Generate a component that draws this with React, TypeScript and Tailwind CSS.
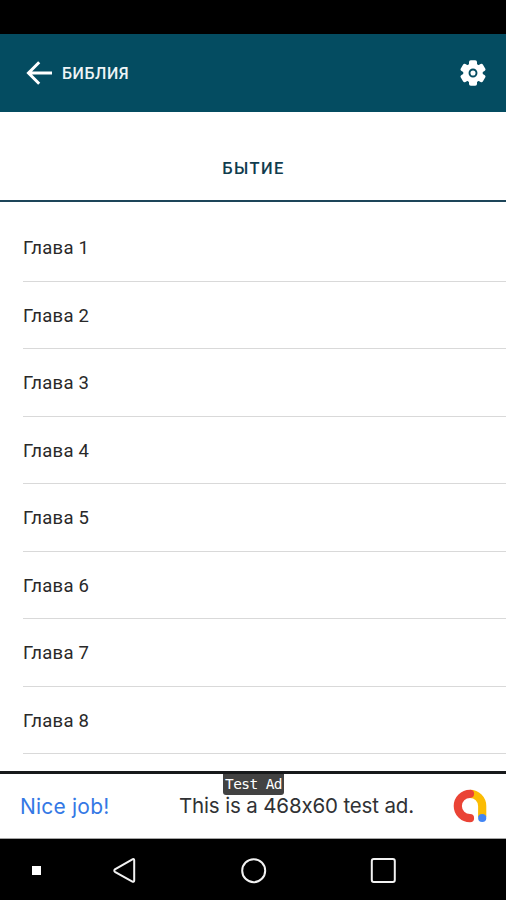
const chapters = [1, 2, 3, 4, 5, 6, 7, 8];

function BackArrow() {
  return (
    <svg width="26" height="24" viewBox="0 0 26 24" fill="none" stroke="#fff" strokeWidth="3">
      <path d="M13.2 1.3 2.5 12l10.7 10.7M2.5 12H26" />
    </svg>
  );
}

function GearIcon() {
  return (
    <svg width="26" height="28" viewBox="-13 -14 26 28">
      <g fill="#fff">
        <circle r="9.8" />
        {[0, 60, 120].map((angle) => (
          <rect key={angle} x="-4" y="-12.8" width="8" height="25.6" rx="1.8" transform={`rotate(${angle})`} />
        ))}
      </g>
      <circle r="3.5" fill="#fff" stroke="#044c61" strokeWidth="1.9" />
    </svg>
  );
}

function AdLogo() {
  return (
    <svg width="34" height="34" viewBox="0 0 34 34" fill="none" strokeWidth="8.2">
      <path d="M17 4.8A12.2 12.2 0 0 1 29.2 17v11" stroke="#fbbc04" />
      <path d="M17 4.8a12.2 12.2 0 0 0 0 24.4" stroke="#ea4335" strokeLinecap="round" />
      <circle cx="29.2" cy="29" r="4.1" fill="#4285f4" />
    </svg>
  );
}

function Header() {
  return (
    <header className="flex h-[78px] items-center bg-[#044c61] pr-5 pl-[26px]">
      <BackArrow />
      <h1 className="mt-0.5 ml-2.5 text-[16px] font-medium tracking-[0.55px] text-[#eef4f6]">БИБЛИЯ</h1>
      <div className="ml-auto">
        <GearIcon />
      </div>
    </header>
  );
}

function AdBanner() {
  return (
    <div className="relative flex h-[68px] items-center border-t-[3px] border-b border-t-[#17191b] border-b-[#a5a5a5] bg-white pl-5 font-['Inter','Noto_Sans',sans-serif] text-[20.5px] [font-feature-settings:'calt'_0]">
      <span className="w-[159px] pt-px text-[21px] tracking-[0.2px] whitespace-nowrap text-[#3478e5]">Nice job!</span>
      <span className="w-[274px] pt-px tracking-[-0.15px] whitespace-nowrap text-[#303134]">This is a 468x60 test ad.</span>
      <AdLogo />
      <span className="absolute top-0 left-[223px] flex h-[21px] w-[61px] items-center justify-center rounded-b-[3px] bg-[#424242] font-['DejaVu_Sans_Mono',monospace] text-[14.5px] tracking-[-0.6px] whitespace-nowrap text-white">
        Test Ad
      </span>
    </div>
  );
}

function NavBar() {
  return (
    <nav className="h-[61px] bg-black">
      <svg width="506" height="61" viewBox="0 0 506 61" fill="none" stroke="#f2f2f2" strokeWidth="2">
        <rect x="32" y="27" width="9" height="9" fill="#fff" stroke="none" />
        <path d="M132.4 20.3 114.9 30.4a1.5 1.5 0 0 0 0 2.4l17.5 9.7c1 .5 1.8 0 1.8-1v-20.2c0-1-.8-1.6-1.8-1Z" />
        <circle cx="253.7" cy="31.7" r="11.5" />
        <rect x="371.8" y="20" width="23" height="23" rx="2" />
      </svg>
    </nav>
  );
}

export default function App() {
  return (
    <div className="flex h-[900px] w-[506px] flex-col overflow-hidden bg-white font-['Roboto',sans-serif]">
      <div className="h-[34px] shrink-0 bg-black" />
      <Header />

      <div className="flex h-[90px] items-center justify-center border-b-2 border-[#1d4559] pt-[26px]">
        <h2 className="pl-px text-[16.5px] font-medium tracking-[1.4px] text-[#103c4e]">БЫТИЕ</h2>
      </div>

      <ul className="h-[569px] overflow-hidden pt-3 pl-[23px]">
        {chapters.map((n) => (
          <li key={n} className="flex h-[67.5px] items-center border-b border-[#d9d9d9] pt-[4px] text-[18.5px] tracking-[0.25px] text-[#292929]">
            Глава {n}
          </li>
        ))}
      </ul>

      <AdBanner />
      <NavBar />
    </div>
  );
}
